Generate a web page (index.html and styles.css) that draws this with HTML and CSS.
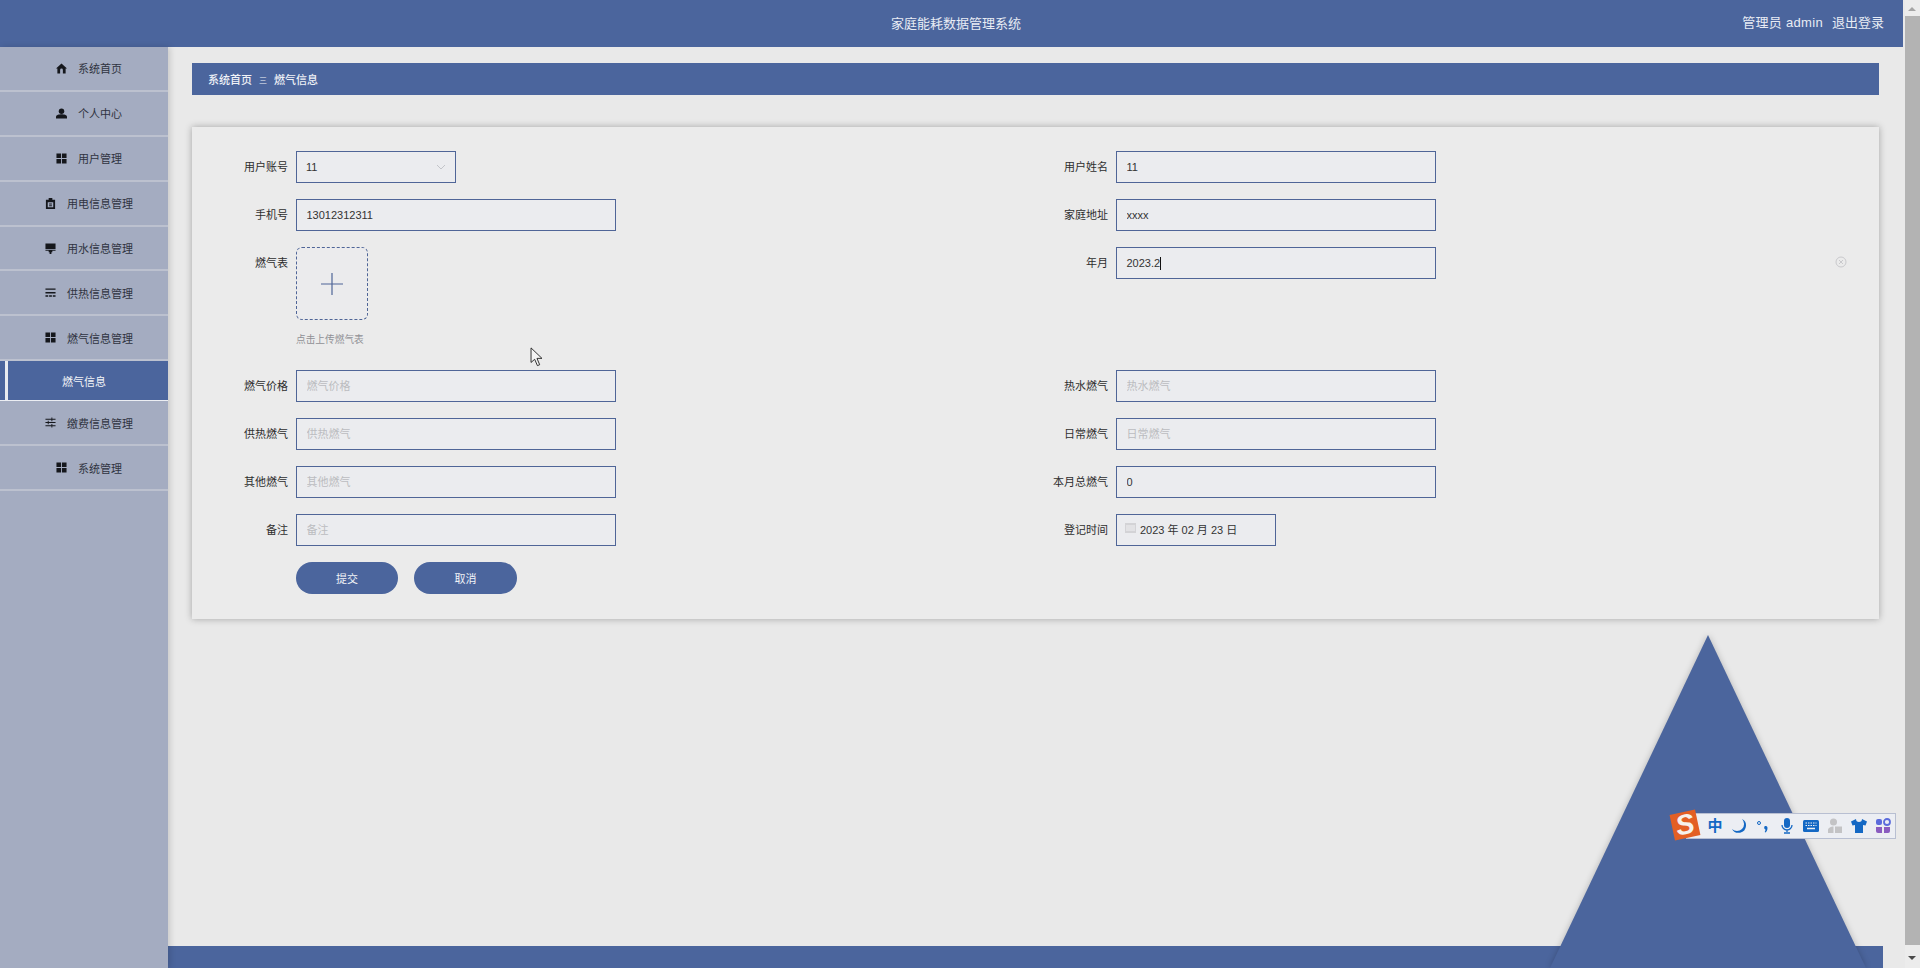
FILE: index.html
```html
<!DOCTYPE html>
<html lang="zh">
<head>
<meta charset="utf-8">
<title>家庭能耗数据管理系统</title>
<link rel="stylesheet" href="styles.css">
</head>
<body>
<div class="page">
  <div class="app">
    <header class="topbar">
      <div class="title">家庭能耗数据管理系统</div>
      <div class="user"><span class="who">管理员 admin</span><span>退出登录</span></div>
    </header>
    <div class="body">
      <nav class="sidebar">
        <a class="item"><svg class="ico" viewBox="0 0 24 24"><path d="M12 1 0 12h3v11h6v-8a3 3 0 0 1 6 0v8h6V12h3z"/></svg><span>系统首页</span></a>
        <a class="item"><svg class="ico" viewBox="0 0 24 24"><circle cx="12" cy="7" r="6"/><path d="M0 23v-4c0-4 7-5.500 12-5.500S24 15 24 19v4z"/></svg><span>个人中心</span></a>
        <a class="item"><svg class="ico" viewBox="0 0 24 24"><path d="M1 1h10v10H1zM13 1h10v10H13zM1 13h10v10H1zM13 13h10v10H13z"/></svg><span>用户管理</span></a>
        <a class="item"><svg class="ico" viewBox="0 0 24 24"><path fill-rule="evenodd" d="M2 4h6V0h8v4h6v20H2zM6 9v11h12V9zM9 12h6v2H9zM9 16h6v2H9z"/></svg><span>用电信息管理</span></a>
        <a class="item"><svg class="ico" viewBox="0 0 24 24"><path d="M1 1h22v12H1zM1 14.500h22V17h-7v3h-2v4h-4v-4H8v-3H1z"/></svg><span>用水信息管理</span></a>
        <a class="item"><svg class="ico" viewBox="0 0 24 24"><path d="M1 3h22v3H1zM1 11h22v3H1zM1 18h6v3H1zM9 18h6v3H9zM17 18h6v3h-6z"/></svg><span>供热信息管理</span></a>
        <a class="item"><svg class="ico" viewBox="0 0 24 24"><path d="M1 1h10v10H1zM13 1h10v10H13zM1 13h10v10H1zM13 13h10v10H13z"/></svg><span>燃气信息管理</span></a>
        <a class="item sub">燃气信息</a>
        <a class="item"><svg class="ico" viewBox="0 0 24 24"><path d="M1 4h13V1h2v3h7v2h-7v3h-2V6H1zM1 11h5V8h2v3h15v2H8v3H6v-3H1zM1 18h13v-3h2v3h7v2h-7v3h-2v-3H1z"/></svg><span>缴费信息管理</span></a>
        <a class="item"><svg class="ico" viewBox="0 0 24 24"><path d="M1 1h10v10H1zM13 1h10v10H13zM1 13h10v10H1zM13 13h10v10H13z"/></svg><span>系统管理</span></a>
      </nav>
      <main class="content">
        <div class="crumb"><b>系统首页</b><i>三</i><b>燃气信息</b></div>
        <form class="card">
          <div class="row"><label>用户账号</label><div class="field short">11<svg class="chev" viewBox="0 0 10 6"><path d="M1 1l4 4 4-4"/></svg></div></div>
          <div class="row"><label>用户姓名</label><input class="field" value="11"></div>
          <div class="row"><label>手机号</label><input class="field" value="13012312311"></div>
          <div class="row"><label>家庭地址</label><input class="field" value="xxxx"></div>
          <div class="row tall">
            <label>燃气表</label>
            <div class="upload-box">
              <div class="upload"><svg viewBox="0 0 22 22"><path d="M0 11h22M11 0v22"/></svg></div>
              <div class="hint">点击上传燃气表</div>
            </div>
          </div>
          <div class="row"><label>年月</label><div class="field">2023.2<span class="caret"></span></div></div>
          <div class="row"><label>燃气价格</label><input class="field" placeholder="燃气价格"></div>
          <div class="row"><label>热水燃气</label><input class="field" placeholder="热水燃气"></div>
          <div class="row"><label>供热燃气</label><input class="field" placeholder="供热燃气"></div>
          <div class="row"><label>日常燃气</label><input class="field" placeholder="日常燃气"></div>
          <div class="row"><label>其他燃气</label><input class="field" placeholder="其他燃气"></div>
          <div class="row"><label>本月总燃气</label><input class="field" value="0"></div>
          <div class="row"><label>备注</label><input class="field" placeholder="备注"></div>
          <div class="row"><label>登记时间</label><div class="field short date"><svg class="cal" viewBox="0 0 11 10"><path d="M0 0h11v10H0z" fill="#d3d3d6"/><path d="M1 3h9M1 5h9M1 7h9" stroke="#f1f1f3"/></svg>2023 年 02 月 23 日</div></div>
          <div class="row actions"><button type="button">提交</button><button type="button" class="wide">取消</button></div>
          <svg class="clear" viewBox="0 0 12 12"><circle cx="6" cy="6" r="5"/><path d="M4 4l4 4M8 4l-4 4"/></svg>
        </form>
        <footer class="foot"></footer>
      </main>
      <div class="triangle"></div>
    </div>
    <svg class="cursor" viewBox="0 0 14 22"><path d="M1 1v16l4-3.500 3 7 2.500-1-3-7H13z"/></svg>
    <div class="ime">
      <div class="ime-logo">S</div>
      <span class="zh">中</span>
      <svg viewBox="0 0 16 16"><path d="M11 1a7 7 0 0 1-10 10 7.500 7.500 0 0 0 14-3 7 7 0 0 0-4-7z"/></svg>
      <svg viewBox="0 0 16 16"><circle cx="4" cy="5" r="1.500" fill="none" stroke="#1468c4"/><path d="M10 8a2 2 0 0 1 2.500 2c0 2-1 3.500-2 4.500l-.8-.5c.5-.8.800-1.500.8-2.500A2 2 0 0 1 10 8z"/></svg>
      <svg viewBox="0 0 16 16"><rect x="5" y="0" width="6" height="10" rx="3"/><path d="M3 7a5 5 0 0 0 10 0M8 12v2M5 15h6" fill="none" stroke="#1468c4" stroke-width="1.300"/></svg>
      <svg viewBox="0 0 16 16"><rect x="0" y="2" width="16" height="12" rx="1.500"/><path d="M2.500 5h11M2.500 7.500h11" stroke="#eef0f4" stroke-dasharray="1.500 1" fill="none"/><path d="M4 10.500h8" stroke="#eef0f4" stroke-width="1.500"/></svg>
      <svg viewBox="0 0 16 16" class="gray"><circle cx="6.500" cy="4" r="3.500"/><path d="M1 15v-3c0-2 3-3.500 5.500-3.500V15z"/><rect x="8" y="8.500" width="7" height="6.500"/></svg>
      <svg viewBox="0 0 16 16"><path d="M5 1 0 3.500l1.500 4L4 7v8h8V7l2.500.500 1.500-4L11 1a3 3 0 0 1-6 0z"/></svg>
      <svg viewBox="0 0 16 16"><rect x="1" y="1" width="6" height="6" rx="2" fill="#5b6bdc"/><circle cx="12" cy="4" r="3" fill="none" stroke="#5b6bdc" stroke-width="1.800"/><path d="M1 9h6v6H3a2 2 0 0 1-2-2z" fill="#8a5cc0"/><path d="M9 9h6v4a2 2 0 0 1-2 2H9z" fill="#8a5cc0"/></svg>
    </div>
  </div>
  <div class="scrollbar">
    <div class="sb-btn up"></div>
    <div class="sb-thumb"></div>
    <div class="sb-btn down"></div>
  </div>
</div>
</body>
</html>
```

FILE: styles.css
```css
* { box-sizing: border-box; }
html, body { margin: 0; height: 100%; overflow: hidden; }
body { font-family: "Liberation Sans", "Noto Sans CJK SC", sans-serif; font-size: 11px; color: #333; }

.page { display: flex; width: 1920px; height: 968px; }
.app { position: relative; width: 1905px; height: 968px; display: flex; flex-direction: column; background: #e9e9e9; overflow: hidden; }

.topbar { position: relative; flex: none; width: 1903px; height: 47px; background: #4b659d; color: #e8ecf4; font-size: 13px; display: flex; align-items: center; justify-content: center; padding-left: 9px; }
.title { margin-bottom: 3px; }
.user { position: absolute; right: 19px; top: 15px; display: flex; gap: 9px; line-height: 16px; }
.who { letter-spacing: .3px; }

.body { position: relative; flex: 1; display: flex; min-height: 0; }

.sidebar { flex: none; width: 168px; background: #a4acc1; box-shadow: 2px 0 6px rgba(0,0,0,.15); position: relative; z-index: 1; }
.item { display: flex; align-items: center; justify-content: center; gap: 11px; height: 44.900px; padding-left: 10px; border-bottom: 2px solid #bcc1cf; color: #2f3340; }
.ico { width: 11px; height: 11px; fill: #15171c; flex: none; }
.item.sub { height: 40px; padding-left: 0; color: #f2f4f8; background: linear-gradient(to right, #4b659d 5px, #e9ebf0 5px, #e9ebf0 8px, #4b659d 8px); border-bottom: 1px solid #eceef3; }

.content { position: relative; flex: 1; min-width: 0; display: flex; flex-direction: column; padding: 16px 0 0 24px; }
.crumb { flex: none; height: 32px; margin-right: 26px; background: #4b659d; color: #f0f2f7; display: flex; align-items: center; padding-left: 16px; gap: 7px; }
.crumb b { font-weight: 500; font-size: 11px; }
.crumb i { font-style: normal; font-size: 8px; }

.card { position: relative; flex: none; margin: 32px 26px 0 0; height: 492px; padding: 24px 0 0 16px; background: #ebebeb; box-shadow: 0 0 7px rgba(0,0,0,.3); display: grid; grid-template-columns: 820px 1fr; grid-template-rows: 32px 32px 107px; grid-auto-rows: 32px; row-gap: 16px; align-content: start; }
.row { display: flex; align-items: flex-start; min-width: 0; }
.row.tall { height: 107px; }
.row label { flex: none; width: 80px; margin-right: 8px; text-align: right; line-height: 32px; color: #2e2e2e; }

.field { display: block; width: 320px; height: 32px; padding: 0 10px 0 9.500px; border: 1px solid #4f6597; background: #ebecef; font: inherit; color: #333; line-height: 30px; border-radius: 0; outline: 0; position: relative; }
input.field::placeholder { color: #bbbcc0; opacity: 1; }
.short { width: 160px; padding-left: 9px; }
.chev { position: absolute; right: 9px; top: 12px; width: 10px; height: 6px; fill: none; stroke: #c2c4c9; stroke-width: 1; }
.caret { display: inline-block; width: 1px; height: 13px; background: #111; vertical-align: -3px; }
.date { padding-left: 23px; }
.cal { position: absolute; left: 8px; top: 8px; width: 11px; height: 10px; }

.upload { width: 72px; height: 73px; border: 1px dashed #4f6597; border-radius: 6px; background: #ebebed; display: flex; align-items: center; justify-content: center; }
.upload svg { width: 22px; height: 22px; stroke: #4f6597; stroke-width: 1.200; fill: none; }
.hint { margin-top: 13px; font-size: 9.700px; line-height: 14px; color: #8f9095; }

.actions { padding-left: 88px; gap: 16px; }
.actions button { width: 102px; height: 32px; border: 0; border-radius: 16px; background: #4b659d; color: #f2f4f8; font: inherit; padding: 0; }
.actions button.wide { width: 103px; }

.clear { position: absolute; left: 1643px; top: 129px; width: 12px; height: 12px; fill: none; stroke: #c9c9cc; stroke-width: 1; }

.foot { position: absolute; left: 0; bottom: 0; width: 1715px; height: 22px; background: #4b659d; }

.triangle { position: absolute; left: 1550px; top: 588px; width: 316px; height: 333px; z-index: 2; filter: drop-shadow(0 0 3px rgba(0,0,0,.22)); }
.triangle::before { content: ""; display: block; width: 100%; height: 100%; background: #4b659d; clip-path: polygon(50% 0, 100% 100%, 0 100%); }

.cursor { position: absolute; left: 530px; top: 347px; width: 13px; height: 20px; fill: #f4f4f4; stroke: #222; stroke-width: 1; z-index: 4; }

.ime { position: absolute; left: 1686px; top: 813px; width: 210px; height: 26px; padding: 0 0 0 20px; background: #eceef3; border: 1px solid #b8bfd2; display: flex; align-items: center; gap: 8px; z-index: 5; }
.ime svg { width: 16px; height: 16px; flex: none; fill: #1468c4; }
.ime svg.gray { fill: #c3c3c5; }
.ime .zh { width: 16px; flex: none; color: #1468c4; font-size: 15px; font-weight: 700; line-height: 16px; text-align: center; }
.ime-logo { position: absolute; left: -15px; top: -2px; width: 26px; height: 26px; background: #e35f24; color: #f6f1ec; font: italic 700 28px/26px "Liberation Sans", sans-serif; text-align: center; transform: rotate(-12deg); }

.scrollbar { flex: none; width: 15px; height: 968px; display: flex; flex-direction: column; background: #f0f0f0; }
.sb-btn { flex: none; height: 16px; position: relative; background: #ececec; }
.down { height: 23px; }
.sb-btn::after { content: ""; position: absolute; left: 3px; border: 4px solid transparent; }
.up::after { top: 3px; border-bottom-color: #a5a5a5; }
.down::after { top: 11px; border-top-color: #4a4a4a; }
.sb-thumb { flex: 1; background: #b3b3b3; }
```
